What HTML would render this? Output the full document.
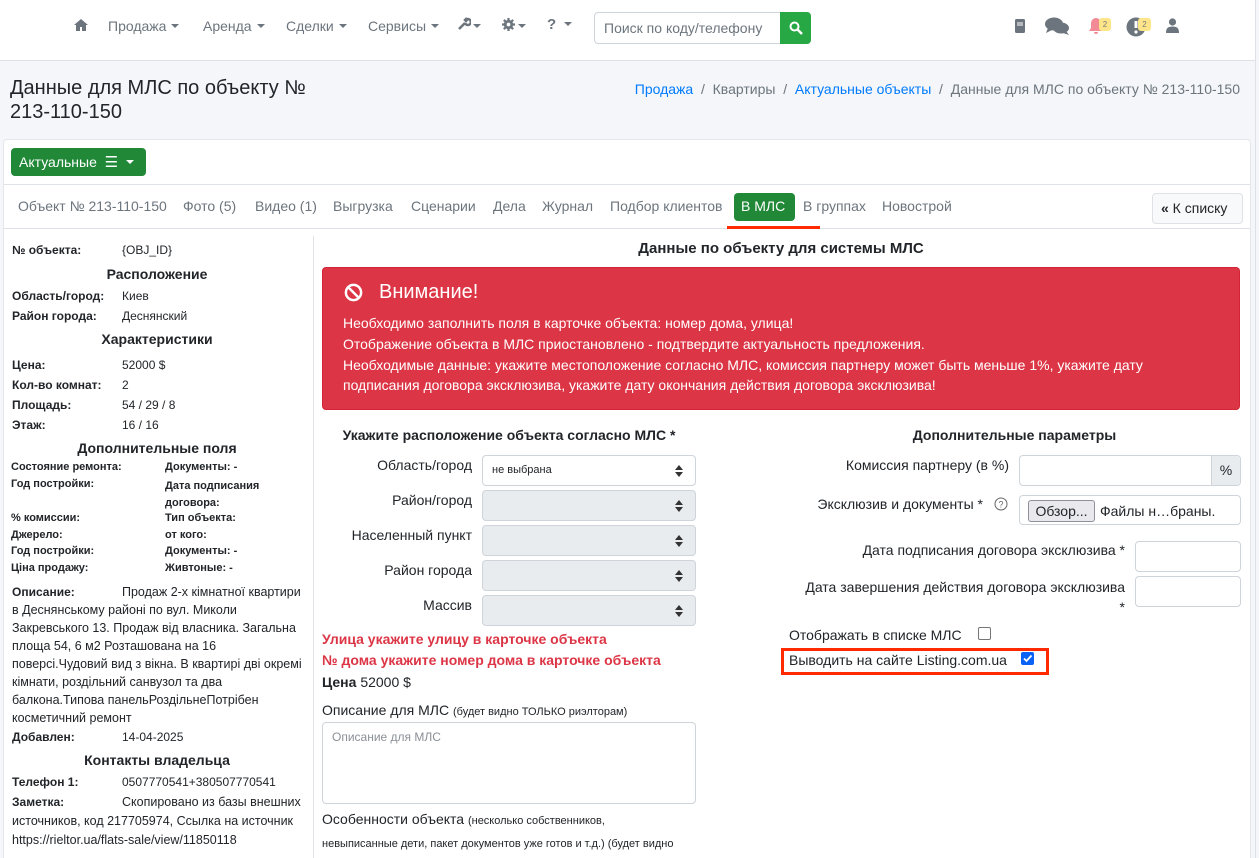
<!DOCTYPE html>
<html><head><meta charset="utf-8"><style>
*{box-sizing:border-box;margin:0;padding:0}
html,body{width:1259px;height:858px;overflow:hidden}
body{background:#f4f6f9;font-family:"Liberation Sans",Arial,sans-serif;color:#212529;position:relative}
.a{position:absolute;white-space:nowrap}
.nav{position:absolute;left:0;top:0;width:1256px;height:61px;background:#fff;border-bottom:1px solid #dee2e6}
.ni{position:absolute;top:17px;font-size:14px;color:#6c757d}
.car{display:inline-block;width:0;height:0;border-left:4px solid transparent;border-right:4px solid transparent;border-top:4px solid #6c757d;vertical-align:3px;margin-left:5px}
.card{position:absolute;left:3px;top:139px;width:1248px;height:730px;background:#fff;border:1px solid #e3e6ea;border-radius:4px}
.lb{position:absolute;left:12px;font-size:12px;font-weight:bold}
.lv{position:absolute;left:122px;font-size:12px}
.h{position:absolute;left:12px;width:290px;text-align:center;font-weight:bold;font-size:14px}
.sm{position:absolute;font-size:11px;font-weight:bold}
.sel{position:absolute;left:482px;width:214px;height:31px;border:1px solid #ced4da;border-radius:4px;background:#e9ecef}
.sel:after{content:"";position:absolute;right:12px;top:9px;border-left:4px solid transparent;border-right:4px solid transparent;border-bottom:5px solid #333}
.sel:before{content:"";position:absolute;right:12px;top:16px;border-left:4px solid transparent;border-right:4px solid transparent;border-top:5px solid #333}
.fl{position:absolute;font-size:14px;text-align:right}
.inp{position:absolute;border:1px solid #ced4da;border-radius:4px;background:#fff}
.tb{position:absolute;top:198px;font-size:14px;color:#6c757d}
</style></head><body>
<div class="nav">
<svg class="a" style="left:73px;top:18px" width="16" height="14" viewBox="0 0 16 14"><path d="M8 1L1 7h2v6h4V9h2v4h4V7h2z" fill="#6c757d"/></svg>
<div class="ni" style="left:108px;top:18px">Продажа<span class="car"></span></div>
<div class="ni" style="left:203px;top:18px">Аренда<span class="car"></span></div>
<div class="ni" style="left:286px;top:18px">Сделки<span class="car"></span></div>
<div class="ni" style="left:368px;top:18px">Сервисы<span class="car"></span></div>
<svg class="a" style="left:457px;top:17px" width="14" height="14" viewBox="0 0 14 14"><path d="M2 12L8 6M8 6a3 3 0 1 0 3-4l-2 2-1-1 2-2" stroke="#6c757d" stroke-width="2.5" fill="none"/></svg><span class="car a" style="left:468px;top:24px"></span>
<svg class="a" style="left:502px;top:18px" width="13" height="13" viewBox="0 0 14 14"><path d="M7 0v14M0 7h14M2 2l10 10M12 2L2 12" stroke="#6c757d" stroke-width="2.4"/><circle cx="7" cy="7" r="5" fill="#6c757d"/><circle cx="7" cy="7" r="2" fill="#fff"/></svg><span class="car a" style="left:513px;top:24px"></span>
<div class="ni" style="left:547px;font-weight:bold;font-size:15px;top:16px">?<span class="car" style="margin-left:8px"></span></div>
<div class="inp" style="left:594px;top:12px;width:188px;height:32px;border-radius:4px 0 0 4px;font-size:14px;color:#6c757d;padding:7px 9px">Поиск по коду/телефону</div>
<div class="a" style="left:780px;top:12px;width:31px;height:32px;background:#28a745;border-radius:0 4px 4px 0"><svg style="position:absolute;left:9px;top:9px" width="14" height="14" viewBox="0 0 14 14"><circle cx="5.5" cy="5.5" r="4" stroke="#fff" stroke-width="2" fill="none"/><path d="M8.5 8.5L13 13" stroke="#fff" stroke-width="2.4"/></svg></div>
<svg class="a" style="left:1014px;top:19px" width="12" height="14" viewBox="0 0 12 14"><rect x="1" y="0" width="10" height="14" rx="1.5" fill="#6c757d"/><path d="M3 4h6M3 6h6" stroke="#fff"/></svg>
<svg class="a" style="left:1045px;top:17px" width="25" height="18" viewBox="0 0 25 18"><ellipse cx="9" cy="7" rx="9" ry="6.5" fill="#6c757d"/><path d="M3 11l-2 5 6-3z" fill="#6c757d"/><ellipse cx="16" cy="11" rx="8" ry="5.5" fill="#6c757d"/><path d="M21 14l3 4-6-2z" fill="#6c757d"/></svg>
<svg class="a" style="left:1088px;top:17px" width="16" height="18" viewBox="0 0 16 18"><path d="M8 1a5 5 0 0 0-5 5v5l-2 3h14l-2-3V6a5 5 0 0 0-5-5zM6 15a2 2 0 0 0 4 0z" fill="#f28b96"/></svg>
<div class="a" style="left:1099px;top:18px;width:12px;height:13px;background:#ffe58a;border-radius:3px;font-size:8px;color:#777;text-align:center;line-height:13px">2</div>
<svg class="a" style="left:1126px;top:17px" width="20" height="20" viewBox="0 0 20 20"><circle cx="10" cy="10" r="9.5" fill="#6c757d"/><path d="M10 4v7" stroke="#fff" stroke-width="3"/><circle cx="10" cy="15" r="1.6" fill="#fff"/></svg>
<div class="a" style="left:1138px;top:18px;width:13px;height:13px;background:#ffe58a;border-radius:3px;font-size:8px;color:#777;text-align:center;line-height:13px">2</div>
<svg class="a" style="left:1166px;top:18px" width="13" height="15" viewBox="0 0 13 15"><circle cx="6.5" cy="4" r="3.6" fill="#6c757d"/><path d="M0 15c0-5 2-6.5 6.5-6.5S13 10 13 15z" fill="#6c757d"/></svg>
</div>
<div class="a" style="left:1255px;top:0;width:1px;height:858px;background:#dee2e6"></div>

<div class="a" style="left:10px;top:76px;font-size:20px;line-height:24px">Данные для МЛС по объекту №<br>213-110-150</div>
<div class="a" style="right:19px;top:81px;font-size:14px;color:#6c757d"><span style="color:#007bff">Продажа</span> &nbsp;/&nbsp; Квартиры &nbsp;/&nbsp; <span style="color:#007bff">Актуальные объекты</span> &nbsp;/&nbsp; Данные для МЛС по объекту № 213-110-150</div>

<div class="card"></div>
<div class="a" style="left:11px;top:148px;width:135px;height:28px;background:#218838;border-radius:4px;color:#fff;font-size:14px;padding:5px 8px">Актуальные &nbsp;<span style="font-size:15px">☰</span><span class="car" style="border-top-color:#fff;margin-left:8px"></span></div>
<div class="a" style="left:4px;top:184px;width:1246px;height:1px;background:#dee2e6"></div>
<div class="a" style="left:4px;top:228px;width:1246px;height:1px;background:#dee2e6"></div>
<div class="tb" style="left:18px">Объект № 213-110-150</div>
<div class="tb" style="left:183px">Фото (5)</div>
<div class="tb" style="left:255px">Видео (1)</div>
<div class="tb" style="left:333px">Выгрузка</div>
<div class="tb" style="left:411px">Сценарии</div>
<div class="tb" style="left:493px">Дела</div>
<div class="tb" style="left:542px">Журнал</div>
<div class="tb" style="left:610px">Подбор клиентов</div>
<div class="a" style="left:734px;top:193px;width:61px;height:28px;background:#218838;border-radius:4px;color:#fff;font-size:14px;padding:5px 7px">В МЛС</div>
<div class="a" style="left:727px;top:226px;width:93px;height:3px;background:#ff2a00"></div>
<div class="tb" style="left:803px">В группах</div>
<div class="tb" style="left:882px">Новострой</div>
<div class="a" style="left:1152px;top:193px;width:91px;height:31px;border:1px solid #dee2e6;border-radius:4px;background:#f8f9fa;font-size:14px;padding:6px 8px"><b>«</b> К списку</div>

<div class="a" style="left:313px;top:236px;width:1px;height:622px;background:#dee2e6"></div>
<div class="lb" style="top:243px">№ объекта:</div><div class="lv" style="top:243px">{OBJ_ID}</div>
<div class="h" style="top:266px">Расположение</div>
<div class="lb" style="top:289px">Область/город:</div><div class="lv" style="top:289px">Киев</div>
<div class="lb" style="top:309px">Район города:</div><div class="lv" style="top:309px">Деснянский</div>
<div class="h" style="top:331px">Характеристики</div>
<div class="lb" style="top:358px">Цена:</div><div class="lv" style="top:358px">52000 $</div>
<div class="lb" style="top:378px">Кол-во комнат:</div><div class="lv" style="top:378px">2</div>
<div class="lb" style="top:398px">Площадь:</div><div class="lv" style="top:398px">54 / 29 / 8</div>
<div class="lb" style="top:418px">Этаж:</div><div class="lv" style="top:418px">16 / 16</div>
<div class="h" style="top:440px">Дополнительные поля</div>
<div class="sm" style="left:11px;top:461px">Состояние ремонта:</div><div class="sm" style="left:165px;top:461px">Документы: -</div>
<div class="sm" style="left:11px;top:478px">Год постройки:</div><div class="sm" style="left:165px;top:478px;line-height:17px">Дата подписания<br>договора:</div>
<div class="sm" style="left:11px;top:512px">% комиссии:</div><div class="sm" style="left:165px;top:512px">Тип объекта:</div>
<div class="sm" style="left:11px;top:529px">Джерело:</div><div class="sm" style="left:165px;top:529px">от кого:</div>
<div class="sm" style="left:11px;top:545px">Год постройки:</div><div class="sm" style="left:165px;top:545px">Документы: -</div>
<div class="sm" style="left:11px;top:562px">Ціна продажу:</div><div class="sm" style="left:165px;top:562px">Живтоные: -</div>
<div class="a" style="left:12px;top:583px;font-size:12.5px;line-height:18px"><b style="font-size:12px">Описание:</b><span style="position:absolute;left:110px;top:0">Продаж 2-х кімнатної квартири</span><br>в Деснянському районі по вул. Миколи<br>Закревського 13. Продаж від власника. Загальна<br>площа 54, 6 м2 Розташована на 16<br>поверсі.Чудовий вид з вікна. В квартирі дві окремі<br>кімнати, роздільний санвузол та два<br>балкона.Типова панельРоздільнеПотрібен<br>косметичний ремонт</div>
<div class="lb" style="top:730px">Добавлен:</div><div class="lv" style="top:730px">14-04-2025</div>
<div class="h" style="top:752px">Контакты владельца</div>
<div class="lb" style="top:775px">Телефон 1:</div><div class="lv" style="top:775px">0507770541+380507770541</div>
<div class="a" style="left:12px;top:793px;font-size:12.5px;line-height:19px"><b style="font-size:12px">Заметка:</b><span style="position:absolute;left:110px;top:0">Скопировано из базы внешних</span><br>источников, код 217705974, Ссылка на источник<br>https://rieltor.ua/flats-sale/view/11850118</div>

<div class="a" style="left:322px;top:240px;width:918px;text-align:center;font-weight:bold;font-size:15px">Данные по объекту для системы МЛС</div>
<div class="a" style="left:322px;top:267px;width:918px;height:143px;background:#dc3545;border:1px solid #d32535;border-radius:4px;color:#fff">
<svg style="position:absolute;left:21px;top:15px" width="19" height="19" viewBox="0 0 20 20"><circle cx="10" cy="10" r="8" stroke="#fff" stroke-width="2.6" fill="none"/><path d="M4.5 4.5l11 11" stroke="#fff" stroke-width="2.6"/></svg>
<div class="a" style="left:56px;top:13px;font-size:20px">Внимание!</div>
<div class="a" style="left:20px;top:45px;font-size:14px;line-height:20.8px">Необходимо заполнить поля в карточке объекта: номер дома, улица!<br>Отображение объекта в МЛС приостановлено - подтвердите актуальность предложения.<br>Необходимые данные: укажите местоположение согласно МЛС, комиссия партнеру может быть меньше 1%, укажите дату<br>подписания договора эксклюзива, укажите дату окончания действия договора эксклюзива!</div>
</div>

<div class="a" style="left:322px;top:427px;width:374px;text-align:center;font-weight:bold;font-size:14px">Укажите расположение объекта согласно МЛС *</div>
<div class="fl" style="right:787px;top:457px">Область/город</div>
<div class="sel" style="top:455px;background:#fff"><span style="position:absolute;left:9px;top:8px;font-size:11px">не выбрана</span></div>
<div class="fl" style="right:787px;top:492px">Район/город</div><div class="sel" style="top:490px"></div>
<div class="fl" style="right:787px;top:527px">Населенный пункт</div><div class="sel" style="top:525px"></div>
<div class="fl" style="right:787px;top:562px">Район города</div><div class="sel" style="top:560px"></div>
<div class="fl" style="right:787px;top:597px">Массив</div><div class="sel" style="top:595px"></div>
<div class="a" style="left:322px;top:631px;color:#dc3545;font-weight:bold;font-size:14px">Улица укажите улицу в карточке объекта</div>
<div class="a" style="left:322px;top:652px;color:#dc3545;font-weight:bold;font-size:14px">№ дома укажите номер дома в карточке объекта</div>
<div class="a" style="left:322px;top:674px;font-size:14px"><b>Цена</b> 52000 $</div>
<div class="a" style="left:322px;top:702px;font-size:14px">Описание для МЛС <span style="font-size:11px">(будет видно ТОЛЬКО риэлторам)</span></div>
<div class="inp" style="left:322px;top:722px;width:374px;height:82px;font-size:12px;color:#8a9097;padding:7px 9px">Описание для МЛС</div>
<div class="a" style="left:322px;top:809px;font-size:14px;line-height:21px">Особенности объекта <span style="font-size:11px">(несколько собственников,<br>невыписанные дети, пакет документов уже готов и т.д.) (будет видно<br>ТОЛЬКО риэлторам)</span></div>

<div class="a" style="left:789px;top:427px;width:451px;text-align:center;font-weight:bold;font-size:14px">Дополнительные параметры</div>
<div class="fl" style="right:250px;top:457px">Комиссия партнеру (в %)</div>
<div class="inp" style="left:1019px;top:455px;width:222px;height:31px"><div style="position:absolute;right:0;top:0;width:29px;height:29px;background:#e9ecef;border-left:1px solid #ced4da;border-radius:0 4px 4px 0;font-size:14px;text-align:center;line-height:29px">%</div></div>
<div class="fl" style="right:276px;top:496px">Эксклюзив и документы *</div>
<svg class="a" style="left:994px;top:497px" width="14" height="14" viewBox="0 0 14 14"><circle cx="7" cy="7" r="6" stroke="#666" fill="none"/><text x="7" y="10.5" font-size="9" text-anchor="middle" fill="#666" font-family="Liberation Sans">?</text></svg>
<div class="inp" style="left:1019px;top:495px;width:222px;height:30px"><div style="position:absolute;left:8px;top:4px;width:67px;height:22px;background:#e9e9ed;border:1px solid #8f8f9d;border-radius:3px;font-size:14px;text-align:center;line-height:20px">Обзор...</div><span style="position:absolute;left:80px;top:7px;font-size:14px">Файлы н…браны.</span></div>
<div class="fl" style="right:134px;top:542px">Дата подписания договора эксклюзива *</div>
<div class="inp" style="left:1135px;top:541px;width:106px;height:31px"></div>
<div class="fl" style="right:134px;top:577px;line-height:20px">Дата завершения действия договора эксклюзива<br>*</div>
<div class="inp" style="left:1135px;top:576px;width:106px;height:31px"></div>
<div class="a" style="left:789px;top:627px;font-size:14px">Отображать в списке МЛС</div>
<div class="a" style="left:978px;top:627px;width:13px;height:13px;border:1px solid #767676;border-radius:2px;background:#fff"></div>
<div class="a" style="left:781px;top:648px;width:268px;height:27px;border:3px solid #ff2a00"></div>
<div class="a" style="left:789px;top:652px;font-size:14px">Выводить на сайте Listing.com.ua</div>
<div class="a" style="left:1021px;top:652px;width:13px;height:13px;background:#0b63f6;border-radius:2px"><svg style="position:absolute;left:1px;top:1px" width="11" height="11" viewBox="0 0 11 11"><path d="M2 5.5l2.5 2.5L9.5 2.5" stroke="#fff" stroke-width="1.8" fill="none"/></svg></div>
</body></html>
